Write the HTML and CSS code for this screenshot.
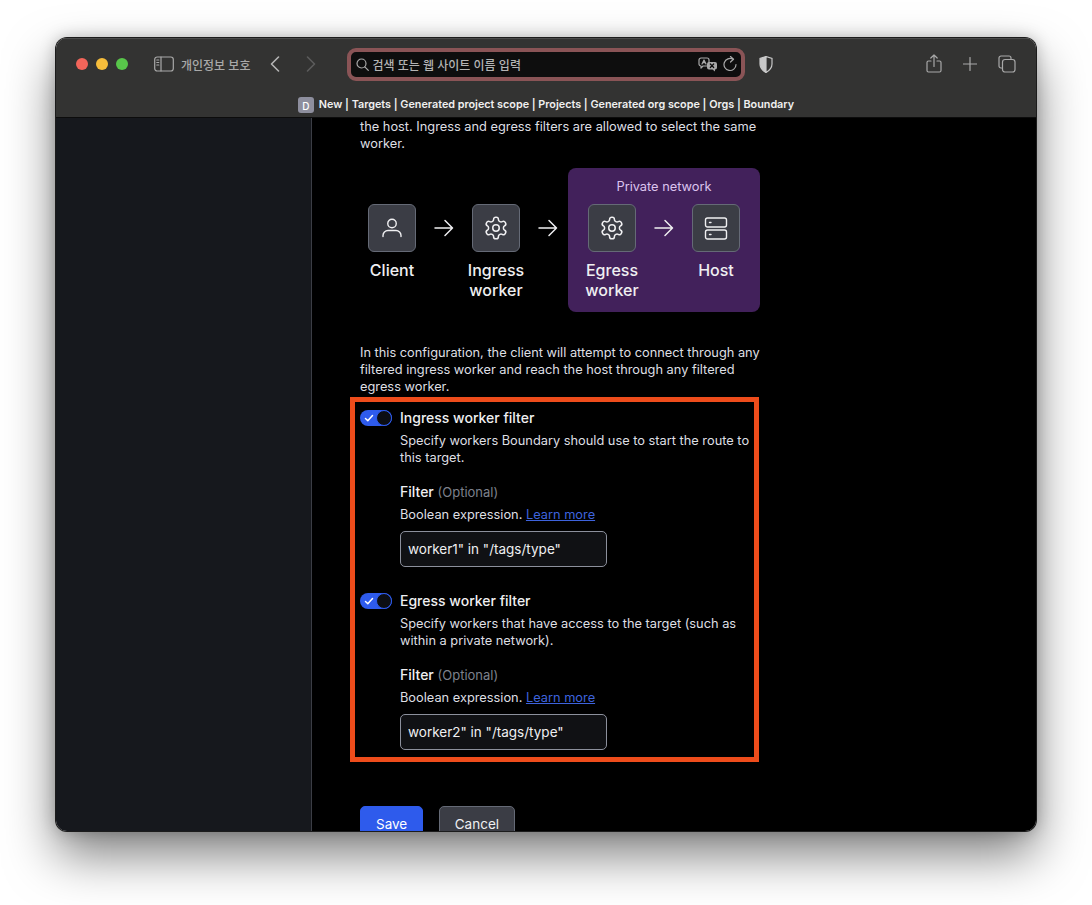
FILE: index.html
```html
<!DOCTYPE html>
<html lang="en">

<head>
    <meta charset="UTF-8">
    <meta name="viewport" content="width=device-width, initial-scale=1.0">
    <title>New | Targets | Boundary</title>
    <link rel="stylesheet" href="styles.css">
</head>

<body>
    <svg class="defs" width="0" height="0">
        <symbol id="gear" viewBox="0 0 24 24">
            <path d="M12.22 2h-.44a2 2 0 0 0-2 2v.18a2 2 0 0 1-1 1.73l-.43.25a2 2 0 0 1-2 0l-.15-.08a2 2 0 0 0-2.73.73l-.22.38a2 2 0 0 0 .73 2.73l.15.1a2 2 0 0 1 1 1.72v.51a2 2 0 0 1-1 1.74l-.15.09a2 2 0 0 0-.73 2.73l.22.38a2 2 0 0 0 2.73.73l.15-.08a2 2 0 0 1 2 0l.43.25a2 2 0 0 1 1 1.73V20a2 2 0 0 0 2 2h.44a2 2 0 0 0 2-2v-.18a2 2 0 0 1 1-1.73l.43-.25a2 2 0 0 1 2 0l.15.08a2 2 0 0 0 2.73-.73l.22-.39a2 2 0 0 0-.73-2.73l-.15-.08a2 2 0 0 1-1-1.74v-.5a2 2 0 0 1 1-1.74l.15-.09a2 2 0 0 0 .73-2.73l-.22-.38a2 2 0 0 0-2.73-.73l-.15.08a2 2 0 0 1-2 0l-.43-.25a2 2 0 0 1-1-1.73V4a2 2 0 0 0-2-2z" />
            <circle cx="12" cy="12" r="3" />
        </symbol>
        <symbol id="arrow" viewBox="0 0 20 20">
            <path d="M1 10h17.5M11 2.500l7.500 7.500-7.500 7.500" />
        </symbol>
        <symbol id="check" viewBox="0 0 10 10">
            <path d="M1.500 5.500l2.300 2.200 4.700-5.200" />
        </symbol>
    </svg>

    <div class="window">
        <header class="toolbar">
            <div class="toolbar-main">
                <div class="lights">
                    <span class="light red"></span>
                    <span class="light yellow"></span>
                    <span class="light green"></span>
                </div>
                <svg class="tool sidebar-icon" width="20" height="16" viewBox="0 0 20 16">
                    <rect x="0.700" y="1" width="18.600" height="14" rx="2.500" />
                    <path d="M7 1v14M2.800 4h2M2.800 6.500h2M2.800 9h2" />
                </svg>
                <span class="privacy">개인정보 보호</span>
                <svg class="tool back" width="10" height="16" viewBox="0 0 10 16">
                    <path d="M8.500 1L1.500 8l7 7" />
                </svg>
                <svg class="tool forward" width="10" height="16" viewBox="0 0 10 16">
                    <path d="M1.500 1l7 7-7 7" />
                </svg>
                <div class="address">
                    <svg class="tool" width="13" height="13" viewBox="0 0 13 13">
                        <circle cx="5.500" cy="5.500" r="4.500" />
                        <path d="M8.800 8.800l3.500 3.500" />
                    </svg>
                    <span class="address-text">검색 또는 웹 사이트 이름 입력</span>
                    <svg class="tool translate" width="19" height="15" viewBox="0 0 19 15">
                        <path d="M3 1h6a2 2 0 0 1 2 2v4a2 2 0 0 1-2 2H5l-2 2V9a2 2 0 0 1-2-2V3a2 2 0 0 1 2-2z" />
                        <path d="M4 7l2-4 2 4M4.800 5.600h2.400" />
                        <path class="solid" d="M11 5h6a2 2 0 0 1 2 2v3.500a2 2 0 0 1-2 2v2l-2.500-2H11a2 2 0 0 1-2-2V7a2 2 0 0 1 2-2z" />
                        <path class="glyph" d="M12.300 7l3.400 3.500M15.700 7l-3.400 3.500" />
                    </svg>
                    <svg class="tool reload" width="14" height="16" viewBox="0 0 14 16">
                        <path d="M10 3.300A6 6 0 1 0 13 8.500" />
                        <path d="M7.500 0.500L10.500 3.300 7.500 6" />
                    </svg>
                </div>
                <svg class="shield" width="14" height="17" viewBox="0 0 14 17">
                    <path class="shield-left" d="M7 0.500L1 2.500v5.500c0 4 3 6.800 6 8.500z" />
                    <path class="shield-right" d="M7 0.500l6 2v5.500c0 4-3 6.800-6 8.500z" />
                </svg>
                <div class="toolbar-right">
                    <svg class="tool" width="16" height="20" viewBox="0 0 16 20">
                        <path d="M5 7H2.500A1.500 1.500 0 0 0 1 8.500v8A1.500 1.500 0 0 0 2.500 18h11a1.500 1.500 0 0 0 1.500-1.500v-8A1.500 1.500 0 0 0 13.500 7H11" />
                        <path d="M8 12.500V1M4.800 4L8 1l3.200 3" />
                    </svg>
                    <svg class="tool" width="14" height="14" viewBox="0 0 14 14">
                        <path d="M7 0.500v13M0.500 7h13" />
                    </svg>
                    <svg class="tool" width="18" height="18" viewBox="0 0 18 18">
                        <path d="M3.500 13H3a2 2 0 0 1-2-2V3a2 2 0 0 1 2-2h8a2 2 0 0 1 2 2v.5" />
                        <rect x="4.500" y="4.500" width="12.500" height="12.500" rx="2.500" />
                    </svg>
                </div>
            </div>
            <div class="tab-title">
                <span class="favicon">D</span>
                <span>New | Targets | Generated project scope | Projects | Generated org scope | Orgs | Boundary</span>
            </div>
        </header>

        <div class="app">
            <aside class="sidebar"></aside>
            <main class="content">
                <p class="intro">the host. Ingress and egress filters are allowed to select the same worker.</p>

                <div class="diagram">
                    <div class="node">
                        <div class="node-icon">
                            <svg width="24" height="24" viewBox="0 0 24 24">
                                <circle cx="12" cy="7.500" r="4.250" />
                                <path d="M3 20.500v-1a5 5 0 0 1 5-5h8a5 5 0 0 1 5 5v1" />
                            </svg>
                        </div>
                        <span class="node-label">Client</span>
                    </div>
                    <div class="link"><svg width="20" height="20"><use href="#arrow" /></svg></div>
                    <div class="node">
                        <div class="node-icon"><svg width="26" height="26"><use href="#gear" /></svg></div>
                        <span class="node-label">Ingress worker</span>
                    </div>
                    <div class="link"><svg width="20" height="20"><use href="#arrow" /></svg></div>
                    <div class="private">
                        <div class="private-title">Private network</div>
                        <div class="private-row">
                            <div class="node">
                                <div class="node-icon"><svg width="26" height="26"><use href="#gear" /></svg></div>
                                <span class="node-label">Egress worker</span>
                            </div>
                            <div class="link"><svg width="20" height="20"><use href="#arrow" /></svg></div>
                            <div class="node">
                                <div class="node-icon">
                                    <svg width="24" height="24" viewBox="0 0 24 24">
                                        <rect x="1.500" y="2" width="21" height="9" rx="2" />
                                        <rect x="1.500" y="14" width="21" height="9" rx="2" />
                                        <path d="M5.500 6.500h1.500M5.500 18.500h1.500" />
                                    </svg>
                                </div>
                                <span class="node-label">Host</span>
                            </div>
                        </div>
                    </div>
                </div>

                <p class="config">In this configuration, the client will attempt to connect through any filtered ingress worker and reach the host through any filtered egress worker.</p>

                <div class="filters">
                    <div class="annotation"></div>

                    <section class="filter">
                        <div class="toggle"><svg width="10" height="10"><use href="#check" /></svg><span class="knob"></span></div>
                        <div class="filter-body">
                            <h3>Ingress worker filter</h3>
                            <p class="help">Specify workers Boundary should use to start the route to this target.</p>
                            <label class="field-label">Filter <span class="optional">(Optional)</span></label>
                            <p class="hint">Boolean expression. <a href="#">Learn more</a></p>
                            <input class="field" type="text" value='worker1" in "/tags/type"'>
                        </div>
                    </section>

                    <section class="filter">
                        <div class="toggle"><svg width="10" height="10"><use href="#check" /></svg><span class="knob"></span></div>
                        <div class="filter-body">
                            <h3>Egress worker filter</h3>
                            <p class="help">Specify workers that have access to the target (such as within a private network).</p>
                            <label class="field-label">Filter <span class="optional">(Optional)</span></label>
                            <p class="hint">Boolean expression. <a href="#">Learn more</a></p>
                            <input class="field" type="text" value='worker2" in "/tags/type"'>
                        </div>
                    </section>
                </div>

                <div class="actions">
                    <button class="btn btn-primary" type="button">Save</button>
                    <button class="btn btn-secondary" type="button">Cancel</button>
                </div>
            </main>
        </div>
    </div>
</body>

</html>
```

FILE: styles.css
```css
html,
body {
    height: 100%;
}

body {
    margin: 0;
    padding: 38px 0 0 56px;
    box-sizing: border-box;
    background-color: #fff;
    font-family: Inter, "Noto Sans CJK KR", sans-serif;
    overflow: hidden;
}

.defs {
    display: block;
    height: 0;
}

.window {
    width: 980px;
    height: 793px;
    display: flex;
    flex-direction: column;
    border-radius: 11px;
    overflow: hidden;
    box-shadow: 0 0 0 1px #1c1c1c, 0 24px 50px rgba(0, 0, 0, 0.5), 0 0 16px rgba(0, 0, 0, 0.25);
}

.toolbar {
    height: 80px;
    flex: none;
    background-color: #333332;
    border-bottom: 1px solid #0c0c0c;
    box-sizing: border-box;
    box-shadow: inset 0 1px 0 #4b4b4b;
}

.toolbar-main {
    height: 52px;
    display: flex;
    align-items: center;
    padding-left: 20px;
}

.lights {
    display: flex;
    gap: 8px;
    margin-right: 26px;
}

.light {
    width: 12px;
    height: 12px;
    border-radius: 50%;
}

.red {
    background-color: #f2655a;
}

.yellow {
    background-color: #f6bd3b;
}

.green {
    background-color: #58c64a;
}

.tool {
    fill: none;
    stroke: #a9a9a9;
    stroke-width: 1.200;
    stroke-linecap: round;
    stroke-linejoin: round;
    flex: none;
}

.privacy {
    margin-left: 7px;
    font-size: 12px;
    font-weight: 500;
    color: #a9a9a9;
    white-space: nowrap;
}

.back {
    margin-left: 20px;
    stroke-width: 1.600;
    stroke: #b5b5b5;
}

.forward {
    margin-left: 26px;
    stroke-width: 1.600;
    stroke: #5c5c5c;
}

.address {
    width: 398px;
    height: 33px;
    margin-left: 31px;
    box-sizing: border-box;
    display: flex;
    align-items: center;
    padding: 0 4px 0 5px;
    background-color: #0e0e0e;
    border: 4px solid #8a5456;
    border-radius: 9px;
}

.address-text {
    margin-left: 3px;
    flex: 1;
    font-size: 12px;
    font-weight: 500;
    color: #b4b4b4;
    white-space: nowrap;
}

.translate .solid {
    fill: #a9a9a9;
    stroke: none;
}

.translate .glyph {
    stroke: #0e0e0e;
}

.reload {
    margin-left: 6px;
}

.shield {
    margin-left: 14px;
}

.shield-left {
    fill: #c8c8c8;
    stroke: #c8c8c8;
    stroke-width: 1.200;
}

.shield-right {
    fill: #333332;
    stroke: #c8c8c8;
    stroke-width: 1.200;
}

.toolbar-right {
    margin-left: auto;
    margin-right: 20px;
    display: flex;
    align-items: center;
    gap: 21px;
}

.tab-title {
    height: 27px;
    box-sizing: border-box;
    padding-top: 2px;
    display: flex;
    align-items: center;
    justify-content: center;
    gap: 5px;
    font-size: 10.800px;
    font-weight: 600;
    color: #f0f0f0;
    white-space: nowrap;
}

.favicon {
    width: 16px;
    height: 16px;
    border-radius: 3px;
    background-color: #8e8f9e;
    color: #fff;
    font-size: 10px;
    font-weight: 500;
    text-align: center;
    line-height: 18px;
}

.app {
    flex: 1;
    display: flex;
    min-height: 0;
}

.sidebar {
    width: 255px;
    flex: none;
    background-color: #16181d;
    border-right: 1px solid #3b3d45;
}

.content {
    flex: 1;
    background-color: #000;
    padding-left: 48px;
    color: #dedfe3;
    font-size: 12.800px;
    line-height: 17px;
    overflow: hidden;
}

.intro {
    width: 404px;
    margin: 0;
}

.diagram {
    display: flex;
    align-items: flex-start;
    margin-top: 16px;
}

.diagram > .node,
.diagram > .link {
    margin-top: 36px;
}

.node {
    width: 64px;
    display: flex;
    flex-direction: column;
    align-items: center;
    text-align: center;
}

.node-icon {
    width: 48px;
    height: 48px;
    box-sizing: border-box;
    display: flex;
    align-items: center;
    justify-content: center;
    background-color: #3b3d45;
    border: 1px solid #656a76;
    border-radius: 6px;
}

.node-icon svg {
    fill: none;
    stroke: #efeff1;
    stroke-width: 1.400;
    stroke-linecap: round;
    stroke-linejoin: round;
}

.node-label {
    margin-top: 8px;
    font-size: 16px;
    line-height: 20px;
    font-weight: 500;
    color: #efeff1;
}

.link {
    width: 40px;
    height: 48px;
    display: flex;
    align-items: center;
    justify-content: center;
}

.link svg {
    fill: none;
    stroke: #efeff1;
    stroke-width: 1.500;
    stroke-linecap: round;
    stroke-linejoin: round;
}

.private {
    width: 192px;
    height: 144px;
    box-sizing: border-box;
    padding: 10px 12px 12px;
    background-color: #42215b;
    border-radius: 8px;
}

.private-title {
    height: 26px;
    text-align: center;
    color: #dcc4ee;
}

.private-row {
    display: flex;
    align-items: flex-start;
}

.config {
    width: 404px;
    margin: 32px 0 0;
}

.filters {
    position: relative;
    width: 392px;
    margin-top: 7px;
    padding-top: 6px;
}

.annotation {
    position: absolute;
    left: -10px;
    right: -7px;
    top: -5px;
    height: 365px;
    box-sizing: border-box;
    border: 5px solid #ee4c1b;
    pointer-events: none;
}

.filter {
    display: flex;
    gap: 8px;
    height: 183px;
}

.toggle {
    position: relative;
    width: 32px;
    height: 16px;
    flex: none;
    margin-top: 2px;
    background-color: #2e5bec;
    border-radius: 8px;
}

.toggle svg {
    position: absolute;
    left: 4px;
    top: 3px;
    fill: none;
    stroke: #fff;
    stroke-width: 1.500;
    stroke-linecap: round;
    stroke-linejoin: round;
}

.knob {
    position: absolute;
    right: 0;
    top: 0;
    width: 16px;
    height: 16px;
    box-sizing: border-box;
    border: 1px solid #2e5bec;
    border-radius: 50%;
    background-color: #0c0e13;
}

.filter-body {
    flex: 1;
}

.filter-body h3 {
    margin: 0;
    font-size: 14px;
    line-height: 20px;
    font-weight: 500;
    color: #efeff1;
}

.help {
    margin: 4px 0 0;
}

.field-label {
    display: block;
    margin-top: 16px;
    font-size: 14px;
    line-height: 20px;
    font-weight: 500;
    color: #efeff1;
}

.optional {
    font-size: 13px;
    font-weight: 400;
    color: #7d818c;
}

.hint {
    margin: 4px 0 0;
}

.hint a {
    color: #3e63dd;
}

.field {
    display: block;
    width: 207px;
    height: 36px;
    margin-top: 8px;
    padding: 0 7px;
    box-sizing: border-box;
    background-color: #101114;
    border: 1px solid #8c909c;
    border-radius: 5px;
    color: #efeff1;
    font-family: Inter, sans-serif;
    font-size: 13.500px;
}

.actions {
    display: flex;
    gap: 16px;
    margin-top: 32px;
}

.btn {
    height: 36px;
    box-sizing: border-box;
    padding: 0 15px;
    border-radius: 5px;
    font-family: Inter, sans-serif;
    font-size: 13.500px;
    cursor: pointer;
}

.btn-primary {
    background-color: #2e5bec;
    border: 1px solid #2e5bec;
    color: #fff;
}

.btn-secondary {
    padding: 0 14.500px;
    background-color: #3b3d45;
    border: 1px solid #656a76;
    color: #efeff1;
}
```
